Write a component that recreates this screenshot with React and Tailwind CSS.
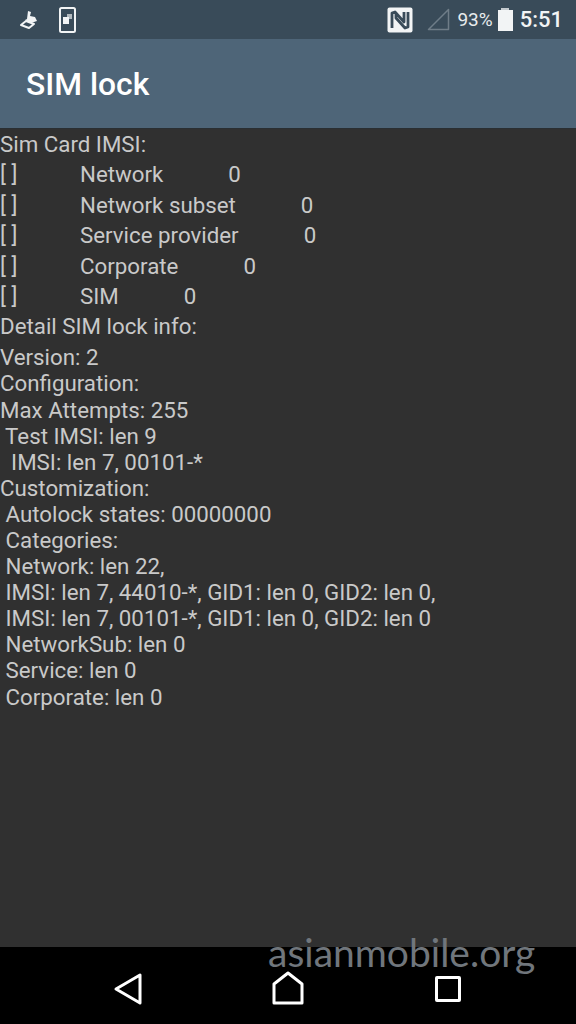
import React from "react";

const rows = [
  ["Network", "0"],
  ["Network subset", "0"],
  ["Service provider", "0"],
  ["Corporate", "0"],
  ["SIM", "0"],
];

const details = [
  "Version: 2",
  "Configuration:",
  "Max Attempts: 255",
  " Test IMSI: len 9",
  "  IMSI: len 7, 00101-*",
  "Customization:",
  " Autolock states: 00000000",
  " Categories:",
  " Network: len 22,",
  " IMSI: len 7, 44010-*, GID1: len 0, GID2: len 0,",
  " IMSI: len 7, 00101-*, GID1: len 0, GID2: len 0",
  " NetworkSub: len 0",
  " Service: len 0",
  " Corporate: len 0",
];

function StatusBar() {
  return (
    <div className="h-[39px] bg-[#394b59] flex items-center pl-[19px] pr-[13px] text-[#f2f4f5]">
      <svg width="20" height="20" viewBox="0 0 20 20" fill="none" className="mr-[20px]">
        <path d="M9 1l3 1-1 4 5 1 2 4-6 2-6-3 2-1z" fill="currentColor" />
        <path d="M2 15l5-4 8 3-5 4z" stroke="currentColor" strokeWidth="2" strokeLinejoin="round" />
      </svg>
      <svg width="17" height="26" viewBox="0 0 17 26" fill="none">
        <rect x="1" y="1" width="15" height="24" rx="1.5" stroke="currentColor" strokeWidth="2" />
        <rect x="8" y="7" width="5" height="5" fill="currentColor" opacity="0.65" />
        <rect x="4" y="10" width="6" height="7" fill="currentColor" />
      </svg>
      <div className="ml-auto flex items-center">
        <svg width="26" height="26" viewBox="0 0 26 26" className="mr-[14px]">
          <rect x="0.5" y="0.5" width="25" height="25" rx="2" fill="currentColor" />
          <path d="M5 21V6l3-1 9 10V5M9 5v6l9 10 3-1V5" fill="none" stroke="#394b59" strokeWidth="2.8" strokeLinejoin="round" />
        </svg>
        <svg width="23" height="23" viewBox="0 0 23 23" fill="none" className="mr-[7px]">
          <path d="M1.5 21.5L21.5 1.5v20z" stroke="#6f7d88" strokeWidth="1.5" strokeLinejoin="round" />
        </svg>
        <span className="text-[19px] leading-none text-[#e8ebed]">93%</span>
        <div className="ml-[5px] flex flex-col items-center mr-[7px]">
          <div className="w-[8px] h-[2px] bg-[#c4cacf]" />
          <div className="w-[15px] h-[21px] bg-[#f2f4f5]" />
        </div>
        <span className="text-[22px] leading-none font-medium">5:51</span>
      </div>
    </div>
  );
}

export default function App() {
  return (
    <div className="relative w-[576px] h-[1024px] flex flex-col bg-[#303030] overflow-hidden font-['Roboto',sans-serif]">
      <StatusBar />
      <div className="h-[90px] bg-[#4e6578] flex items-center pl-[26px] pt-[3px] border-b border-[#2a2f33]">
        <h1 className="text-[31.8px] font-medium text-white leading-none">SIM lock</h1>
      </div>

      <div className="flex-1 text-[22.3px] text-[#c9c9c9] whitespace-pre">
        <div className="h-[30.4px] leading-[30.4px]">Sim Card IMSI:</div>
        {rows.map(([label, value]) => (
          <div key={label} className="flex h-[30.4px] leading-[30.4px]">
            <span className="w-[80px]">[ ]</span>
            <span>{label}</span>
            <span className="ml-[65px]">{value}</span>
          </div>
        ))}
        <div className="h-[30.4px] leading-[30.4px] mb-[2.6px]">Detail SIM lock info:</div>
        {details.map((line, i) => (
          <div key={i} className="h-[26.1px] leading-[26.1px]">{line}</div>
        ))}
      </div>

      <div className="h-[77px] bg-black flex items-center justify-center text-white">
        <div className="w-[160px] flex justify-center pt-[7px]">
          <svg width="30" height="34" viewBox="0 0 30 34" fill="none">
            <path d="M27 3v28L3 17z" stroke="currentColor" strokeWidth="3" strokeLinejoin="round" />
          </svg>
        </div>
        <div className="w-[160px] flex justify-center pt-[4px]">
          <svg width="34" height="34" viewBox="0 0 34 34" fill="none">
            <path d="M3 13L17 2l14 11v19H3z" stroke="currentColor" strokeWidth="3" strokeLinejoin="round" />
          </svg>
        </div>
        <div className="w-[160px] flex justify-center pt-[7px]">
          <div className="w-[26px] h-[26px] border-[3px] border-white rounded-[2px]" />
        </div>
      </div>

      <span className="absolute left-[268px] top-[929px] text-[39px] leading-[46px] font-['Lato',sans-serif] text-[#70767c]">
        asianmobile.org
      </span>
    </div>
  );
}
